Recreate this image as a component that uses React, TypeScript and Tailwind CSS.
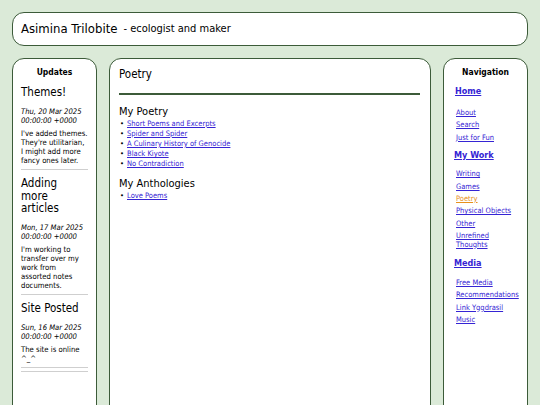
import React from "react";

const font = { fontFamily: '"DejaVu Sans Condensed", "DejaVu Sans", Verdana, sans-serif' };

const updates = [
  {
    title: "Themes!",
    date: ["Thu, 20 Mar 2025", "00:00:00 +0000"],
    body: "I've added themes. They're utilitarian, I might add more fancy ones later.",
  },
  {
    title: "Adding more articles",
    date: ["Mon, 17 Mar 2025", "00:00:00 +0000"],
    body: "I'm working to transfer over my work from assorted notes documents.",
  },
  {
    title: "Site Posted",
    date: ["Sun, 16 Mar 2025", "00:00:00 +0000"],
    body: "The site is online ^_^",
  },
];

const poems = [
  "Short Poems and Excerpts",
  "Spider and Spider",
  "A Culinary History of Genocide",
  "Black Kiyote",
  "No Contradiction",
];

const navGroups = [
  { head: "Home", pad: "pl-[2px] mt-[8px]", gap: "mt-[12px]", items: ["About", "Search", "Just for Fun"] },
  {
    head: "My Work",
    pad: "pl-[1px] mt-[8px]",
    gap: "mt-[9px]",
    items: ["Writing", "Games", "Poetry", "Physical Objects", "Other", "Unrefined Thoughts"],
  },
  {
    head: "Media",
    pad: "pl-[1px] mt-[9px]",
    gap: "mt-[10px]",
    items: ["Free Media", "Recommendations", "Link Yggdrasil", "Music"],
  },
];

function Link({ children, active }: { children: React.ReactNode; active?: boolean }) {
  return (
    <a href="#" className={active ? "text-[#e8901c] underline" : "text-[#3524d4] underline"}>
      {children}
    </a>
  );
}

export default function App() {
  return (
    <div style={font} className="h-[405px] w-[540px] overflow-hidden bg-[#dbead8] px-3 pt-3 text-black">
      <header className="flex h-[34px] items-center rounded-[12px] border-[1.5px] border-[#3c5b39] bg-white px-2">
        <span className="text-[13px]">Asimina Trilobite</span>
        <span className="ml-[6px] text-[11px]">- ecologist and maker</span>
      </header>

      <div className="mt-[12px] flex gap-3">
        <aside className="min-h-[380px] w-[85px] shrink-0 rounded-[12px] border-[1.5px] border-[#3c5b39] bg-white px-[8px] pt-[8px]">
          <div className="text-center text-[8.5px] leading-[11px] font-semibold">Updates</div>
          {updates.map((u, i) => (
            <div key={u.title} className="border-b border-[#cfcfcf] pb-[3.5px]">
              <h2 className={(i === 0 ? "mt-[8px]" : "mt-[7.5px]") + " pr-[3px] text-[11.5px] leading-[12.5px]"}>
                {u.title}
              </h2>
              <div className="mt-[8px] text-[7.6px] leading-[9px] italic">
                {u.date[0]}
                <br />
                {u.date[1]}
              </div>
              <p className="mt-[4.5px] text-[7.7px] leading-[9px]">{u.body}</p>
            </div>
          ))}
          <div className="mt-[3.5px] border-b border-[#cfcfcf]" />
        </aside>

        <main className="min-h-[380px] flex-1 rounded-[12px] border-[1.5px] border-[#3c5b39] bg-white pr-[10px] pl-[9px] pt-[7px]">
          <h1 className="text-[11.5px] leading-[16px]">Poetry</h1>
          <div className="mt-[11px] h-[1.5px] bg-[#3c5b39]" />
          <h2 className="mt-[10px] text-[11px] leading-[13px]">My Poetry</h2>
          <ul className="mt-[1px]">
            {poems.map((p) => (
              <li key={p} className="flex text-[7.5px] leading-[10.2px]">
                <span className="w-[8px] pl-[1px]">•</span>
                <Link>{p}</Link>
              </li>
            ))}
          </ul>
          <h2 className="mt-[7px] text-[11px] leading-[13px]">My Anthologies</h2>
          <ul className="mt-[1px]">
            <li className="flex text-[7.5px] leading-[10px]">
              <span className="w-[8px] pl-[1px]">•</span>
              <Link>Love Poems</Link>
            </li>
          </ul>
        </main>

        <nav className="min-h-[380px] w-[85px] shrink-0 rounded-[12px] border-[1.5px] border-[#3c5b39] bg-white px-[9px] pt-[8px]">
          <div className="text-center text-[8.5px] leading-[11px] font-semibold">Navigation</div>
          {navGroups.map((g) => (
            <div key={g.head}>
              <div className={g.pad + " text-[9px] leading-[11px] font-semibold"}>
                <Link>{g.head}</Link>
              </div>
              <ul className={g.gap + " pl-[3px]"}>
                {g.items.map((it) => (
                  <li key={it} className="mb-[4px] text-[7.5px] leading-[8.4px]">
                    <Link active={it === "Poetry"}>{it}</Link>
                  </li>
                ))}
              </ul>
            </div>
          ))}
        </nav>
      </div>
    </div>
  );
}
